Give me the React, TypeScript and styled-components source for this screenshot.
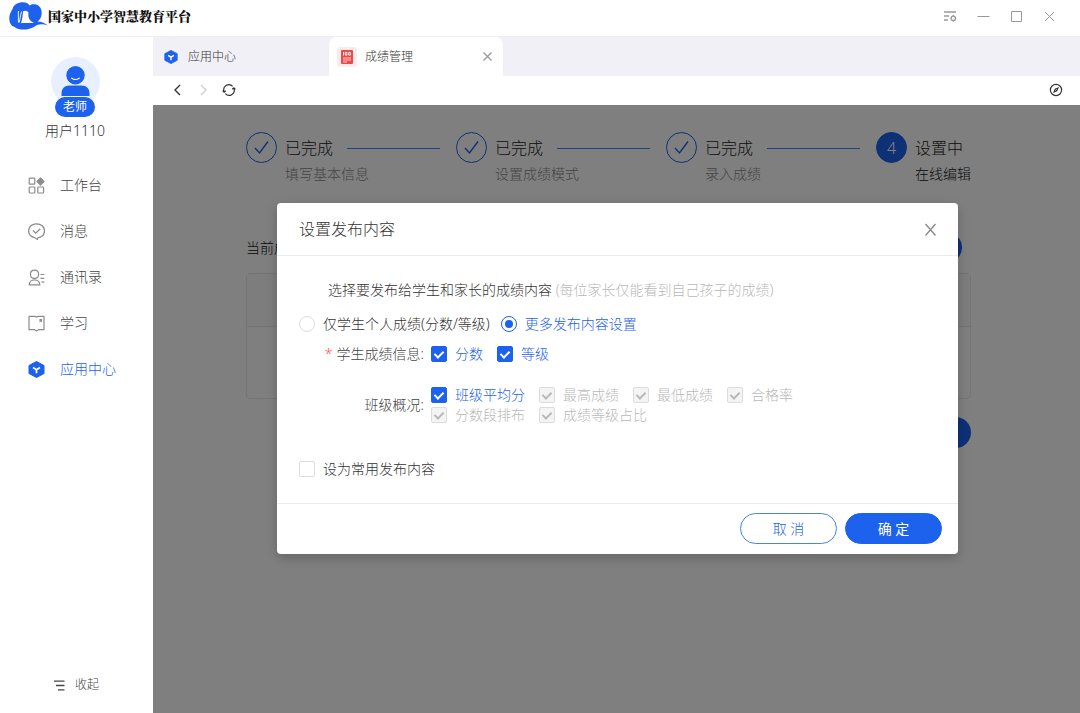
import React from "react";
import styled, { createGlobalStyle, css } from "styled-components";

const BLUE = "#1d62ec";

const GlobalStyle = createGlobalStyle`
  *, *::before, *::after { box-sizing: border-box; }
  body {
    margin: 0;
    background: #fff;
    color: #333;
    font: 300 14px/20px "Noto Sans", "Noto Sans CJK SC", sans-serif;
  }
  button, input { font: inherit; }
  ul, ol, p, h1, h2, fieldset { margin: 0; padding: 0; border: 0; }
  svg { display: block; flex: none; }
`;

const Page = styled.div`
  display: flex;
  flex-direction: column;
  min-height: 100vh;
`;

const TitleBar = styled.header`
  display: flex;
  align-items: center;
  justify-content: space-between;
  height: 37px;
  padding: 0 24px 4px 9px;
  border-bottom: 1px solid #f0f0f2;
`;

const Brand = styled.h1`
  display: flex;
  align-items: center;
  color: #111;
  font: 900 13px/20px "Noto Serif CJK SC", "Noto Sans CJK SC", serif;
`;

const WindowControls = styled.div`
  display: flex;
  align-items: center;
  gap: 20px;
`;

const IconButton = styled.button<{ $color?: string }>`
  display: flex;
  padding: 0;
  border: 0;
  background: none;
  color: ${(p) => p.$color ?? "#999"};
  cursor: pointer;
`;

const Main = styled.div`
  display: flex;
  flex: 1;
`;

const Sidebar = styled.aside`
  display: flex;
  flex: none;
  flex-direction: column;
  width: 153px;
  padding: 20px 0 18px;
`;

const Profile = styled.div`
  display: flex;
  flex-direction: column;
  align-items: center;
  gap: 15px;
  margin: 0 3px 21px 0;
`;

const Avatar = styled.div`
  position: relative;
  display: flex;
  justify-content: center;
`;

const RoleBadge = styled.span`
  position: absolute;
  bottom: -11px;
  width: 40px;
  border-radius: 10px;
  background: ${BLUE};
  color: #fff;
  font-size: 12px;
  font-weight: 400;
  text-align: center;
`;

const MenuLink = styled.a<{ $active?: boolean }>`
  display: flex;
  align-items: center;
  gap: 15px;
  height: 46px;
  padding-left: 28px;
  color: ${(p) => (p.$active ? BLUE : "#444")};
  text-decoration: none;

  svg { color: ${(p) => (p.$active ? BLUE : "#8c8c8c")}; }
`;

const Menu = styled.ul`
  list-style: none;
`;

const Collapse = styled.button`
  display: flex;
  align-items: center;
  gap: 10px;
  margin-top: auto;
  padding: 0 0 0 54px;
  border: 0;
  background: none;
  color: #444;
  font-size: 12px;
  line-height: 20px;
`;

const Workspace = styled.div`
  display: flex;
  flex: 1;
  flex-direction: column;
  min-width: 0;
`;

const TabBar = styled.nav`
  display: flex;
  height: 39px;
  background: #f1f0f6;
`;

const Tab = styled.div<{ $active?: boolean }>`
  display: flex;
  align-items: center;
  gap: ${(p) => (p.$active ? 8 : 10)}px;
  width: ${(p) => (p.$active ? 174 : 176)}px;
  padding: 0 ${(p) => (p.$active ? "10px 0 8px" : "11px")};
  border-radius: 8px 8px 0 0;
  background: ${(p) => (p.$active ? "#fff" : "transparent")};
  color: #333;
  font-size: 12px;

  button { margin-left: auto; }
`;

const ToolBar = styled.div`
  display: flex;
  align-items: center;
  gap: 12px;
  height: 29px;
  padding: 0 17px 2px;
  background: #fff;

  button:last-child { margin-left: auto; }
`;

const Content = styled.main`
  position: relative;
  flex: 1;
  padding: 27px 109px 60px 93px;
`;

const Steps = styled.ol`
  display: flex;
  list-style: none;
`;

const Step = styled.li<{ $current?: boolean }>`
  display: flex;
  flex: ${(p) => (p.$current ? "none" : 1)};
  gap: 8px;
`;

const StepMark = styled.span<{ $current?: boolean }>`
  display: flex;
  flex: none;
  align-items: center;
  justify-content: center;
  width: 31px;
  height: 31px;
  border: 1px solid ${BLUE};
  border-radius: 50%;
  background: ${(p) => (p.$current ? BLUE : "transparent")};
  color: ${(p) => (p.$current ? "#fff" : BLUE)};
  font-size: 16px;
`;

const StepText = styled.div`
  flex: 1;
`;

const StepTitle = styled.div<{ $line?: boolean }>`
  display: flex;
  align-items: center;
  gap: 14px;
  height: 32px;
  margin-right: ${(p) => (p.$line ? 16 : 0)}px;
  color: #222;
  font-size: 16px;

  ${(p) =>
    p.$line &&
    css`
      &::after {
        content: "";
        flex: 1;
        height: 1px;
        background: #3d8bf5;
      }
    `}
`;

const StepNote = styled.div<{ $current?: boolean }>`
  color: ${(p) => (p.$current ? "#111" : "#888")};
`;

const Summary = styled.div`
  display: flex;
  align-items: center;
  justify-content: space-between;
  margin: 48px 9px 10px 0;
  color: #111;
`;

const PillAction = styled.button`
  width: 97px;
  height: 31px;
  border: 0;
  border-radius: 16px;
  background: ${BLUE};
`;

const ScoreTable = styled.table`
  width: 100%;
  margin-bottom: 18px;
  border: 1px solid #e8e8e8;
  border-radius: 4px;
  border-spacing: 0;

  th { height: 53px; padding: 0; border-bottom: 1px solid #e8e8e8; background: #fafafa; }
  td { height: 71px; padding: 0; }
`;

const Actions = styled.div`
  display: flex;
  justify-content: flex-end;
`;

const Overlay = styled.div`
  position: absolute;
  inset: 0;
  display: flex;
  align-items: flex-start;
  justify-content: center;
  padding: 98px 24px 24px 26px;
  background: rgba(0, 0, 0, 0.5);
`;

const Dialog = styled.section`
  width: 100%;
  max-width: 681px;
  border-radius: 4px;
  background: #fff;
  box-shadow: 0 4px 12px rgba(0, 0, 0, 0.2);
`;

const DialogHeader = styled.header`
  display: flex;
  align-items: center;
  justify-content: space-between;
  height: 53px;
  padding: 0 21px 0 22px;
  border-bottom: 1px solid #ececec;
`;

const DialogTitle = styled.h2`
  font-size: 16px;
  font-weight: 300;
`;

const DialogBody = styled.form`
  display: flex;
  flex-direction: column;
  padding: 22px;
  line-height: 24px;
`;

const Intro = styled.p`
  padding-left: 29px;
`;

const Hint = styled.span`
  color: #b8b8b8;
`;

const RadioRow = styled.div`
  display: flex;
  gap: 11px;
  margin: 10px 0 6px;
`;

const FieldRow = styled.fieldset`
  display: flex;
  align-items: center;
  gap: 7px;
  margin-bottom: 19px;
`;

const FieldName = styled.span<{ $required?: boolean }>`
  width: 125px;
  color: #444;
  text-align: right;

  ${(p) =>
    p.$required &&
    css`
      &::before {
        content: "*";
        margin-right: 4px;
        color: #ff4d4f;
      }
    `}
`;

const Options = styled.div<{ $dense?: boolean }>`
  display: flex;
  flex: 1;
  flex-wrap: wrap;
  column-gap: 14px;
  line-height: ${(p) => (p.$dense ? 20 : 24)}px;
`;

const RowBreak = styled.span`
  width: 100%;
`;

const Choice = styled.label`
  display: flex;
  align-items: center;
  gap: 8px;
  white-space: nowrap;

  &:has(input:checked) { color: ${BLUE}; }
  &:has(input:disabled) { color: #b8b8b8; }
`;

const CheckInput = styled.input.attrs({ type: "checkbox" })`
  display: grid;
  flex: none;
  place-items: center;
  width: 16px;
  height: 16px;
  margin: 0;
  border: 1px solid #dcdcdc;
  border-radius: 2px;
  background: #fff;
  appearance: none;

  &:checked { border-color: ${BLUE}; background: ${BLUE}; }
  &:checked::after {
    content: "";
    width: 6px;
    height: 9px;
    border: solid #fff;
    border-width: 0 2px 2px 0;
    transform: translateY(-1px) rotate(45deg);
  }
  &:disabled { border-color: #dcdcdc; background: #f4f4f4; }
  &:disabled::after { border-color: #b8b8b8; }
`;

const RadioInput = styled.input.attrs({ type: "radio" })`
  display: grid;
  flex: none;
  place-items: center;
  width: 16px;
  height: 16px;
  margin: 0;
  border: 1px solid #dcdcdc;
  border-radius: 50%;
  appearance: none;

  &:checked { border-color: ${BLUE}; }
  &:checked::after {
    content: "";
    width: 8px;
    height: 8px;
    border-radius: 50%;
    background: ${BLUE};
  }
`;

const SaveDefault = styled(Choice)`
  margin-top: 13px;
`;

const DialogFooter = styled.footer`
  display: flex;
  justify-content: flex-end;
  gap: 8px;
  padding: 9px 16px 10px;
  border-top: 1px solid #ececec;
`;

const DialogButton = styled.button<{ $primary?: boolean }>`
  width: 97px;
  height: 31px;
  padding: 0;
  border: 1px solid ${(p) => (p.$primary ? BLUE : "#4a82f0")};
  border-radius: 16px;
  background: ${(p) => (p.$primary ? BLUE : "#fff")};
  color: ${(p) => (p.$primary ? "#fff" : BLUE)};
  font-weight: ${(p) => (p.$primary ? 400 : 300)};
`;

const Line = ({ d, size = 17, box = 17, width = 1 }: { d: string; size?: number; box?: number; width?: number }) => (
  <svg width={size} height={size} viewBox={`0 0 ${box} ${box}`} fill="none" stroke="currentColor" strokeWidth={width} aria-hidden="true">
    <path d={d} />
  </svg>
);

const Logo = () => (
  <svg width="39" height="28" viewBox="0 0 39 28" aria-hidden="true">
    <path
      fill={BLUE}
      d="M2.200 9.500C2.800 8 3.300 7.800 3.500 7 4.500 2.500 9 .2 14 .2c3 0 5.200 1.200 6.600 3.200C22.500 2 25 2 27 2.600c4 1.200 5.800 4.600 5.700 8.600-.1 3.600-1.500 6.300-4.200 8.300 3.700 0 7 1.200 10.300 4-4-1.500-7.500-1.900-10.700-.4C25 25 21.500 27.600 15 27.600c-4.300 0-7.300-.6-9.300-2.600C2.300 24.300.3 20.800.3 16.500c0-2.700.7-5 1.900-7Z"
    />
    <path fill="#fff" d="M14 9.300c2.300-1.200 4.300-.6 5.500 1C19 13 19.500 15.500 20.600 17.600c1 1.700 2.500 2.500 4.600 3.200-4.200.8-8.200-.3-13.200.4 1.300-3.700 1.800-7.900 2-11.900Z" />
    <path fill="none" stroke="#fff" strokeWidth=".9" d="m12.500 9.500-2.400 11.200M9.400 9v11.500" />
  </svg>
);

const Hexagon = ({ size }: { size: number }) => (
  <svg width={size} height={size} viewBox="0 0 17 17" aria-hidden="true">
    <path fill={BLUE} stroke={BLUE} strokeLinejoin="round" d="M8.500.5 16 4.500v8L8.500 16.500 1 12.500v-8Z" />
    <path fill="none" stroke="#fff" strokeWidth="1.700" d="m5 6.500 3.500 2.200L12 6.500M8.500 8.500v3.800" />
  </svg>
);

const Person = () => (
  <svg width="49" height="49" viewBox="0 0 49 49" aria-hidden="true">
    <circle cx="24.500" cy="24.500" r="24.500" fill="#e8f0ff" />
    <circle cx="24.500" cy="18.200" r="9.200" fill={BLUE} />
    <path d="M20.800 21.200q3.700 2.600 7.400 0" fill="none" stroke="#fff" strokeWidth="1.200" strokeLinecap="round" />
    <path d="M10.500 39v-2.500c0-5 3-8 8-8h12c5 0 8 3 8 8V39Z" fill={BLUE} />
  </svg>
);

const WorkbenchIcon = () => (
  <svg width="17" height="17" viewBox="0 0 17 17" fill="none" stroke="currentColor" strokeWidth="1.200" aria-hidden="true">
    <rect x="1.200" y="1.200" width="5.600" height="6" rx=".8" />
    <rect x="1.200" y="10" width="5.600" height="6" rx=".8" />
    <rect x="9.800" y="10" width="5.800" height="6" rx=".8" />
    <path d="m12.500 1 3.500 3.500L12.500 8 9 4.500Z" fill="currentColor" strokeLinejoin="round" />
  </svg>
);

const MessageIcon = () => (
  <Line width={1.3} d="M8.500.8c4.500 0 8 3 8 7 0 3.700-2.800 6.300-6.300 6.900L9.300 16.300l-3-1.800C3 13.700.6 11.200.6 7.800c0-4 3.400-7 7.900-7ZM5 7.500l2.700 2.700 4.600-4.500" />
);

const ContactsIcon = () => (
  <Line width={1.2} d="M6.500 1.200c2.400 0 4.100 1.700 4.100 4s-1.700 4.100-4.100 4.100S2.400 7.500 2.400 5.200s1.700-4 4.100-4ZM1.200 15.800c0-3 2.400-5 5.300-5s5.300 2 5.300 5ZM12.500 5.500h3.800M12.500 9.300h3.800M13.500 13.200h2.800" />
);

const StudyIcon = () => (
  <svg width="17" height="17" viewBox="0 0 17 17" fill="none" stroke="currentColor" strokeWidth="1.200" aria-hidden="true">
    <path d="M1 1.300h6l1.500.8 1.500-.8h6v13.400h-5.500L8.500 16l-2-1.300H1Z" strokeLinejoin="round" />
    <path d="M11.500 4h2.600v3.400l-1.300-.8-1.300.8Z" fill="currentColor" stroke="none" />
  </svg>
);

const ScoreIcon = () => (
  <svg width="20" height="20" viewBox="0 0 20 20" aria-hidden="true">
    <rect width="20" height="20" rx="3" fill="#faeaea" />
    <rect x="4" y="3" width="12" height="14" rx="1" fill="#e94b4b" />
    <path d="M6.500 5v3.500M8.300 5.400h1.600v2.700H8.300ZM11.700 5.400h1.600v2.700h-1.600Z" fill="none" stroke="#fff" strokeWidth=".9" />
    <path d="M6 11h8M6 13h8M6 15h4" fill="none" stroke="#fff" strokeWidth=".7" />
  </svg>
);

const FilterIcon = () => (
  <svg width="14" height="12" viewBox="0 0 14 12" fill="none" stroke="currentColor" strokeWidth="1.400" aria-hidden="true">
    <path d="M1 2h12M1 6h5M1 10h4" />
    <circle cx="10.300" cy="8.300" r="2.200" />
    <path d="M10.300 5v1.200M10.300 10.400v1.200" />
  </svg>
);

const CompassIcon = () => (
  <svg width="14" height="14" viewBox="0 0 14 14" fill="none" stroke="currentColor" strokeWidth="1.200" aria-hidden="true">
    <circle cx="7" cy="7" r="5.600" />
    <path d="M10 4 8.200 8.200 4 10l1.800-4.200Z" fill="currentColor" stroke="none" />
    <path d="m6.500 7.500 1-1" stroke="#fff" strokeWidth="1" />
  </svg>
);

const RefreshIcon = () => (
  <Line size={14} box={14} width={1.2} d="M2.200 9A5.200 5.200 0 0 1 10.700 3.300M11.800 5a5.200 5.200 0 0 1-8.500 5.700M.6 7.600l1.500 1.600 1.700-1.400M10.200 6.200l1.700-1.400 1.500 1.600" />
);

const menu = [
  { label: "工作台", icon: <WorkbenchIcon /> },
  { label: "消息", icon: <MessageIcon /> },
  { label: "通讯录", icon: <ContactsIcon /> },
  { label: "学习", icon: <StudyIcon /> },
  { label: "应用中心", icon: <Hexagon size={17} />, active: true },
];

const steps = ["填写基本信息", "设置成绩模式", "录入成绩"];

const Check = ({ label, disabled }: { label: string; disabled?: boolean }) => (
  <Choice>
    <CheckInput defaultChecked disabled={disabled} />
    {label}
  </Choice>
);

export default function App() {
  return (
    <Page>
      <GlobalStyle />
      <TitleBar>
        <Brand>
          <Logo />
          国家中小学智慧教育平台
        </Brand>
        <WindowControls>
          <IconButton aria-label="设置"><FilterIcon /></IconButton>
          <IconButton aria-label="最小化"><Line size={13} box={13} d="M.5 6.500h12" /></IconButton>
          <IconButton aria-label="最大化"><Line size={13} box={13} d="M1.500 1.500h10v10h-10Z" /></IconButton>
          <IconButton aria-label="关闭"><Line size={13} box={13} d="m2 2 9 9M11 2l-9 9" /></IconButton>
        </WindowControls>
      </TitleBar>
      <Main>
        <Sidebar>
          <Profile>
            <Avatar>
              <Person />
              <RoleBadge>老师</RoleBadge>
            </Avatar>
            <span>用户1110</span>
          </Profile>
          <Menu>
            {menu.map((m) => (
              <li key={m.label}>
                <MenuLink href="#" $active={m.active}>
                  {m.icon}
                  {m.label}
                </MenuLink>
              </li>
            ))}
          </Menu>
          <Collapse>
            <Line size={11} box={11} width={1.3} d="M0 1.200h10.500M2 5.500h8.500M4 9.800h6.500" />
            收起
          </Collapse>
        </Sidebar>
        <Workspace>
          <TabBar>
            <Tab>
              <Hexagon size={14} />
              应用中心
            </Tab>
            <Tab $active>
              <ScoreIcon />
              成绩管理
              <IconButton aria-label="关闭标签页"><Line size={11} box={11} width={1.3} d="m1.500 1.500 8 8M9.500 1.500l-8 8" /></IconButton>
            </Tab>
          </TabBar>
          <ToolBar>
            <IconButton aria-label="后退" $color="#333"><Line size={14} box={14} width={1.4} d="M10 2 5 7l5 5" /></IconButton>
            <IconButton aria-label="前进" $color="#ccc"><Line size={14} box={14} width={1.2} d="m5 2 5 5-5 5" /></IconButton>
            <IconButton aria-label="刷新" $color="#333"><RefreshIcon /></IconButton>
            <IconButton aria-label="浏览" $color="#333"><CompassIcon /></IconButton>
          </ToolBar>
          <Content>
            <Steps>
              {steps.map((note) => (
                <Step key={note}>
                  <StepMark><Line size={17} width={1.4} d="m2 9 4.500 5L15 2.500" /></StepMark>
                  <StepText>
                    <StepTitle $line>已完成</StepTitle>
                    <StepNote>{note}</StepNote>
                  </StepText>
                </Step>
              ))}
              <Step $current>
                <StepMark $current>4</StepMark>
                <StepText>
                  <StepTitle>设置中</StepTitle>
                  <StepNote $current>在线编辑</StepNote>
                </StepText>
              </Step>
            </Steps>
            <Summary>
              当前成绩
              <PillAction aria-label="编辑" />
            </Summary>
            <ScoreTable>
              <thead><tr><th /></tr></thead>
              <tbody><tr><td /></tr></tbody>
            </ScoreTable>
            <Actions><PillAction aria-label="发布" /></Actions>
            <Overlay>
              <Dialog role="dialog" aria-labelledby="dialog-title">
                <DialogHeader>
                  <DialogTitle id="dialog-title">设置发布内容</DialogTitle>
                  <IconButton aria-label="关闭" $color="#888"><Line size={13} box={13} width={1.3} d="m1.500 1 10 11.500M11.500 1l-10 11.500" /></IconButton>
                </DialogHeader>
                <DialogBody id="publish">
                  <Intro>
                    选择要发布给学生和家长的成绩内容 <Hint>(每位家长仅能看到自己孩子的成绩)</Hint>
                  </Intro>
                  <RadioRow>
                    <Choice>
                      <RadioInput name="scope" />
                      仅学生个人成绩(分数/等级)
                    </Choice>
                    <Choice>
                      <RadioInput name="scope" defaultChecked />
                      更多发布内容设置
                    </Choice>
                  </RadioRow>
                  <FieldRow>
                    <FieldName $required>学生成绩信息:</FieldName>
                    <Options>
                      <Check label="分数" />
                      <Check label="等级" />
                    </Options>
                  </FieldRow>
                  <FieldRow>
                    <FieldName>班级概况:</FieldName>
                    <Options $dense>
                      <Check label="班级平均分" />
                      <Check label="最高成绩" disabled />
                      <Check label="最低成绩" disabled />
                      <Check label="合格率" disabled />
                      <RowBreak />
                      <Check label="分数段排布" disabled />
                      <Check label="成绩等级占比" disabled />
                    </Options>
                  </FieldRow>
                  <SaveDefault>
                    <CheckInput />
                    设为常用发布内容
                  </SaveDefault>
                </DialogBody>
                <DialogFooter>
                  <DialogButton type="button">取 消</DialogButton>
                  <DialogButton type="submit" form="publish" $primary>确 定</DialogButton>
                </DialogFooter>
              </Dialog>
            </Overlay>
          </Content>
        </Workspace>
      </Main>
    </Page>
  );
}
